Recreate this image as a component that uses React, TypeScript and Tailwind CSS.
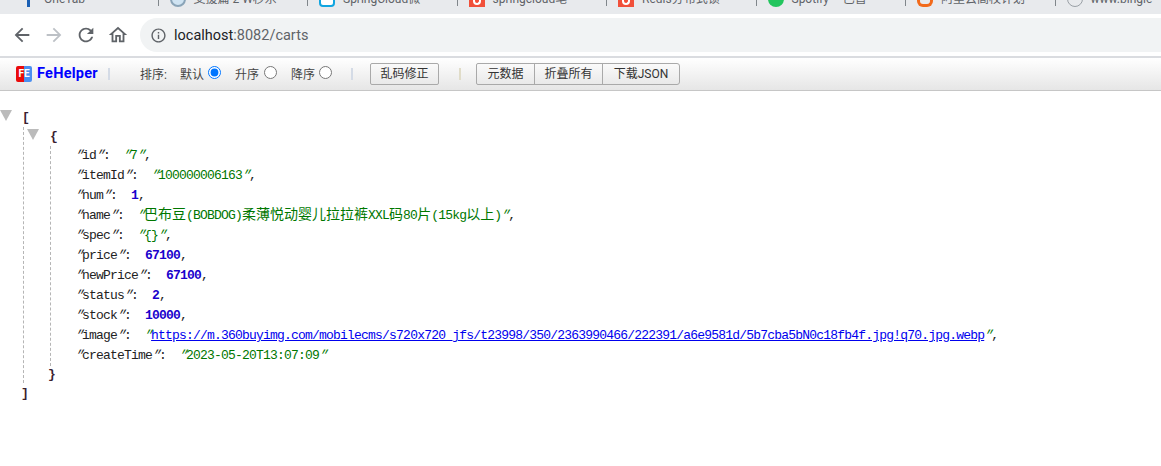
import type { ReactNode } from 'react'

const TABS = [
  { label: 'OneTab', icon: 'pin' },
  { label: '支援篇 2 W秒杀', icon: 'globe' },
  { label: 'SpringCloud微', icon: 'box' },
  { label: 'springcloud笔', icon: 'csdn' },
  { label: 'Redis分布式锁', icon: 'csdn' },
  { label: 'Spotify – 已暂', icon: 'spotify' },
  { label: '阿里云高校计划', icon: 'ali' },
  { label: 'www.bingle', icon: 'ring' },
]

function TabIcon({ kind }: { kind: string }) {
  if (kind === 'pin') return <div className="w-4 h-4 flex justify-center"><div className="w-[3px] h-full bg-[#1a5fb4]" /></div>
  if (kind === 'globe') return <div className="w-4 h-4 rounded-full border-2 border-[#8aa4b8] bg-[#cfe3f2]" />
  if (kind === 'box') return <div className="w-4 h-4 rounded-sm border-2 border-[#10a5e0] bg-white" />
  if (kind === 'csdn') return <div className="w-4 h-4 bg-[#f1503a] flex items-end justify-center pb-[2px]"><div className="w-2 h-[5px] rounded-b-full border-2 border-t-0 border-white" /></div>
  if (kind === 'spotify') return <div className="w-4 h-4 rounded-full bg-[#22c55e]" />
  if (kind === 'ali') return <div className="w-4 h-4 rounded-b-md border-b-[3px] border-x-[3px] border-[#f26a1b]" />
  return <div className="w-4 h-4 rounded-full border border-[#9aa0a6]" />
}

function TabStrip() {
  return (
    <div className="h-[14px] bg-[#e8eaed] overflow-hidden flex items-start pl-[9px]">
      {TABS.map((t, i) => (
        <div key={i} className="w-[149.5px] shrink-0 h-[14px] flex items-start">
          <div className="flex-1 min-w-0 pl-[11px] flex items-center gap-[8px] -mt-[9px] h-4 overflow-hidden">
            <div className="shrink-0"><TabIcon kind={t.icon} /></div>
            <span className="text-[12px] text-[#5f6368] whitespace-nowrap leading-4">{t.label}</span>
          </div>
          <div className="w-px h-[6px] bg-[#80868b] shrink-0" />
        </div>
      ))}
    </div>
  )
}

function NavIcon({ d, color = '#5f6368' }: { d: string; color?: string }) {
  return (
    <svg width="22" height="22" viewBox="0 0 24 24" fill={color}>
      <path d={d} />
    </svg>
  )
}

function AddressBar() {
  return (
    <div className="h-[44px] bg-white flex items-center pl-[11px] border-b-2 border-[#dadce0]">
      <div className="flex items-center gap-[10px]">
        <NavIcon d="M20 11H7.83l5.59-5.59L12 4l-8 8 8 8 1.41-1.41L7.83 13H20v-2z" />
        <NavIcon color="#bdc1c6" d="M4 13h12.17l-5.59 5.59L12 20l8-8-8-8-1.41 1.41L16.17 11H4v2z" />
        <NavIcon d="M17.65 6.35A7.958 7.958 0 0 0 12 4c-4.42 0-7.99 3.58-7.99 8s3.57 8 7.99 8c3.73 0 6.84-2.55 7.73-6h-2.08A5.99 5.99 0 0 1 12 18c-3.31 0-6-2.69-6-6s2.69-6 6-6c1.66 0 3.14.69 4.22 1.78L13 11h7V4l-2.35 2.35z" />
        <NavIcon d="M12 5.69l5 4.5V18h-2v-6H9v6H7v-7.81l5-4.5M12 3L2 12h3v8h6v-6h2v6h6v-8h3L12 3z" />
      </div>
      <div className="ml-[11px] flex-1 h-[34px] bg-[#f1f3f4] rounded-l-[17px] flex items-center pl-[10px] gap-[7px]">
        <svg width="17" height="17" viewBox="0 0 24 24" fill="#5f6368">
          <path d="M11 7h2v2h-2zm0 4h2v6h-2zm1-9C6.48 2 2 6.48 2 12s4.48 10 10 10 10-4.48 10-10S17.52 2 12 2zm0 18c-4.41 0-8-3.59-8-8s3.59-8 8-8 8 3.59 8 8-3.59 8-8 8z" />
        </svg>
        <span className="mt-[2px] text-[14.5px] text-[#5f6368]">
          <span className="text-[#202124]">localhost</span>:8082/carts
        </span>
      </div>
    </div>
  )
}

function Sep({ color = '#d4dbe6' }: { color?: string }) {
  return <div className="w-[2px] h-[12px] shrink-0" style={{ backgroundColor: color }} />
}

function Radio({ checked }: { checked?: boolean }) {
  return <input type="radio" name="sort" defaultChecked={checked} className="w-[13px] h-[13px] m-0 shrink-0 accent-[#0075ff] -translate-y-[2px]" />
}

const btn = 'h-[22px] border border-[#a9a9a9] bg-gradient-to-b from-[#fafafa] to-[#e9e9e9] text-[12px] text-[#333] flex items-center justify-center'

function FeBar() {
  return (
    <div className="h-[33px] rounded-tl-[4px] border-b border-[#c6c6c6] bg-gradient-to-b from-white to-[#e6e6e6] flex items-center pl-4 text-[12px] text-[#444]">
      <div className="w-4 h-4 rounded-[2px] bg-gradient-to-r from-[#ea0a0a] from-50% to-[#4a8ff0] to-50% flex items-center justify-center text-[10px] font-bold text-white leading-none shrink-0">FE</div>
      <span className="ml-[5px] w-[71px] text-[14.5px] font-bold text-[#0000ff] tracking-[0.25px]">FeHelper</span>
      <Sep />
      <span className="ml-[30px] w-[40px] mt-[2px]">排序:</span>
      <span className="mt-[2px]">默认</span>
      <span className="ml-[4px] flex"><Radio checked /></span>
      <span className="ml-[14px] mt-[2px]">升序</span>
      <span className="ml-[5px] flex"><Radio /></span>
      <span className="ml-[14px] mt-[2px]">降序</span>
      <span className="ml-[4px] flex"><Radio /></span>
      <div className="ml-[19px]"><Sep /></div>
      <button className={`${btn} ml-[17px] w-[69px] rounded-[2px]`}>乱码修正</button>
      <div className="ml-[20px]"><Sep color="#e0dcc8" /></div>
      <div className="ml-[15px] flex">
        <button className={`${btn} w-[59px] rounded-l-[2px]`}>元数据</button>
        <button className={`${btn} w-[69px] -ml-px`}>折叠所有</button>
        <button className={`${btn} w-[78px] -ml-px rounded-r-[3px]`}>下载JSON</button>
      </div>
    </div>
  )
}

function Fold() {
  return <div className="absolute w-0 h-0 border-x-[6px] border-x-transparent border-t-[11px] border-t-[#bbbbbb]" />
}

function Q() {
  return <span className="inline-block italic -skew-x-[20deg]">"</span>
}

function Key({ name, value }: { name: string; value: ReactNode }) {
  return (
    <div className="h-[20px] flex items-center whitespace-pre text-[#222]">
      <span><Q />{name}<Q />:</span>
      <span className="ml-[13px] flex items-center">{value}</span>
    </div>
  )
}

function Str({ children }: { children: ReactNode }) {
  return <span className="text-[#007700]"><Q />{children}<Q /></span>
}

function Num({ children }: { children: ReactNode }) {
  return <span className="font-bold text-[#1a01cc] ml-px">{children}</span>
}

function Cjk({ children }: { children: ReactNode }) {
  return <span className="text-[14px] leading-none tracking-normal">{children}</span>
}

function Comma() {
  return <span className="text-[#222]">,</span>
}

const URL_TEXT = 'https://m.360buyimg.com/mobilecms/s720x720_jfs/t23998/350/2363990466/222391/a6e9581d/5b7cba5bN0c18fb4f.jpg!q70.jpg.webp'

function JsonTree() {
  return (
    <div className="pt-[17px] font-['Liberation_Mono','Noto_Sans_CJK_SC',monospace] text-[13px] tracking-[-0.8px] relative">
      <div className="relative h-[19px] flex items-center pl-[22px] font-bold text-[#3a2030]">
        <div className="absolute left-0 top-[2px]"><Fold /></div>
        [
      </div>
      <div className="ml-[23px] border-l border-dashed border-[#b5b5b5] pl-[26px] w-fit">
        <div className="relative h-[19px] flex items-center font-bold text-[#3a2030]">
          <div className="absolute -left-[23px] top-[2px]"><Fold /></div>
          {'{'}
        </div>
        <div className="border-l border-dashed border-[#b5b5b5] pl-[24px]">
          <Key name="id" value={<><Str>7</Str><Comma /></>} />
          <Key name="itemId" value={<><Str>100000006163</Str><Comma /></>} />
          <Key name="num" value={<><Num>1</Num><Comma /></>} />
          <Key name="name" value={<><Str><Cjk>巴布豆</Cjk>(BOBDOG)<Cjk>柔薄悦动婴儿拉拉裤</Cjk>XXL<Cjk>码</Cjk>80<Cjk>片</Cjk>(15kg<Cjk>以上</Cjk>)</Str><Comma /></>} />
          <Key name="spec" value={<><Str>{'{}'}</Str><Comma /></>} />
          <Key name="price" value={<><Num>67100</Num><Comma /></>} />
          <Key name="newPrice" value={<><Num>67100</Num><Comma /></>} />
          <Key name="status" value={<><Num>2</Num><Comma /></>} />
          <Key name="stock" value={<><Num>10000</Num><Comma /></>} />
          <Key name="image" value={<><span className="text-[#007700]"><Q /></span><a href="#" className="text-[#0000ee] underline">{URL_TEXT}</a><span className="text-[#007700]"><Q /></span><Comma /></>} />
          <Key name="createTime" value={<Str>2023-05-20T13:07:09</Str>} />
        </div>
        <div className="h-[17px] flex items-center font-bold text-[#3a2030] -ml-[2px]">{'}'}</div>
      </div>
      <div className="h-[21px] flex items-center pl-[21px] font-bold text-[#3a2030]">]</div>
    </div>
  )
}

export default function App() {
  return (
    <div className="w-[1161px] h-[466px] overflow-hidden bg-white font-['Roboto','Noto_Sans_CJK_SC',sans-serif]">
      <TabStrip />
      <AddressBar />
      <FeBar />
      <JsonTree />
    </div>
  )
}
